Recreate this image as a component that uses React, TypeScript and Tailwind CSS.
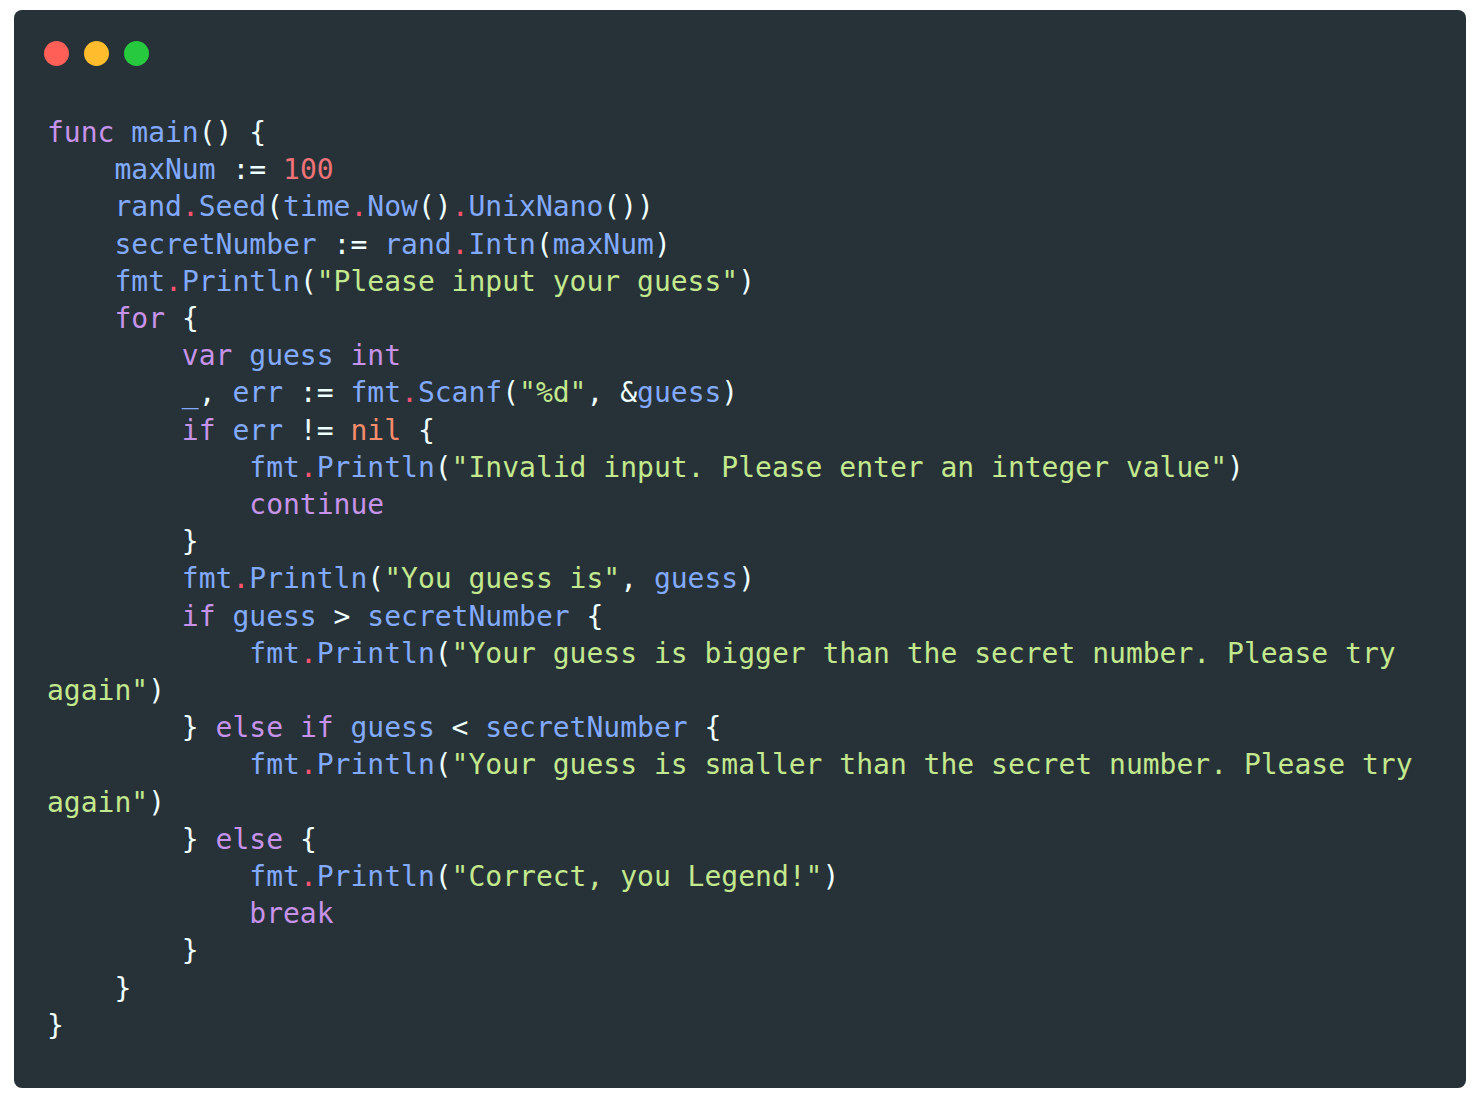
const K = ({ children }: { children: React.ReactNode }) => (
  <span className="text-[#c792ea]">{children}</span>
);
const F = ({ children }: { children: React.ReactNode }) => (
  <span className="text-[#82aaff]">{children}</span>
);
const S = ({ children }: { children: React.ReactNode }) => (
  <span className="text-[#c3e88d]">{children}</span>
);
const D = () => <span className="text-[#ff5370]">.</span>;

export default function App() {
  return (
    <div className="min-h-[1098px] bg-white pt-[10px] pl-[14px]">
      <div className="w-[1452px] h-[1078px] rounded-[8px] bg-[#263238] pt-[31px] pl-[30px] pr-[33px]">
        <div className="flex gap-[15px]">
          <span className="w-[25px] h-[25px] rounded-full bg-[#ff5f56]" />
          <span className="w-[25px] h-[25px] rounded-full bg-[#ffbd2e]" />
          <span className="w-[25px] h-[25px] rounded-full bg-[#27c93f]" />
        </div>
        <pre
          className="mt-[48px] ml-[3px] whitespace-pre-wrap text-[28px] leading-[37.2px] text-[#eeffff]"
          style={{ fontFamily: '"DejaVu Sans Mono", monospace' }}
        >
          <K>func</K> <F>main</F>() {"{"}
          {"\n    "}<F>maxNum</F> := <span className="text-[#f07178]">100</span>
          {"\n    "}<F>rand</F><D /><F>Seed</F>(<F>time</F><D /><F>Now</F>()<D /><F>UnixNano</F>())
          {"\n    "}<F>secretNumber</F> := <F>rand</F><D /><F>Intn</F>(<F>maxNum</F>)
          {"\n    "}<F>fmt</F><D /><F>Println</F>(<S>"Please input your guess"</S>)
          {"\n    "}<K>for</K> {"{"}
          {"\n        "}<K>var</K> <F>guess</F> <K>int</K>
          {"\n        "}<F>_</F>, <F>err</F> := <F>fmt</F><D /><F>Scanf</F>(<S>"%d"</S>, &amp;<F>guess</F>)
          {"\n        "}<K>if</K> <F>err</F> != <span className="text-[#f78c6c]">nil</span> {"{"}
          {"\n            "}<F>fmt</F><D /><F>Println</F>(<S>"Invalid input. Please enter an integer value"</S>)
          {"\n            "}<K>continue</K>
          {"\n        }"}
          {"\n        "}<F>fmt</F><D /><F>Println</F>(<S>"You guess is"</S>, <F>guess</F>)
          {"\n        "}<K>if</K> <F>guess</F> &gt; <F>secretNumber</F> {"{"}
          {"\n            "}<F>fmt</F><D /><F>Println</F>(<S>"Your guess is bigger than the secret number. Please try again"</S>)
          {"\n        } "}<K>else</K> <K>if</K> <F>guess</F> &lt; <F>secretNumber</F> {"{"}
          {"\n            "}<F>fmt</F><D /><F>Println</F>(<S>"Your guess is smaller than the secret number. Please try again"</S>)
          {"\n        } "}<K>else</K> {"{"}
          {"\n            "}<F>fmt</F><D /><F>Println</F>(<S>"Correct, you Legend!"</S>)
          {"\n            "}<K>break</K>
          {"\n        }"}
          {"\n    }"}
          {"\n}"}
        </pre>
      </div>
    </div>
  );
}
